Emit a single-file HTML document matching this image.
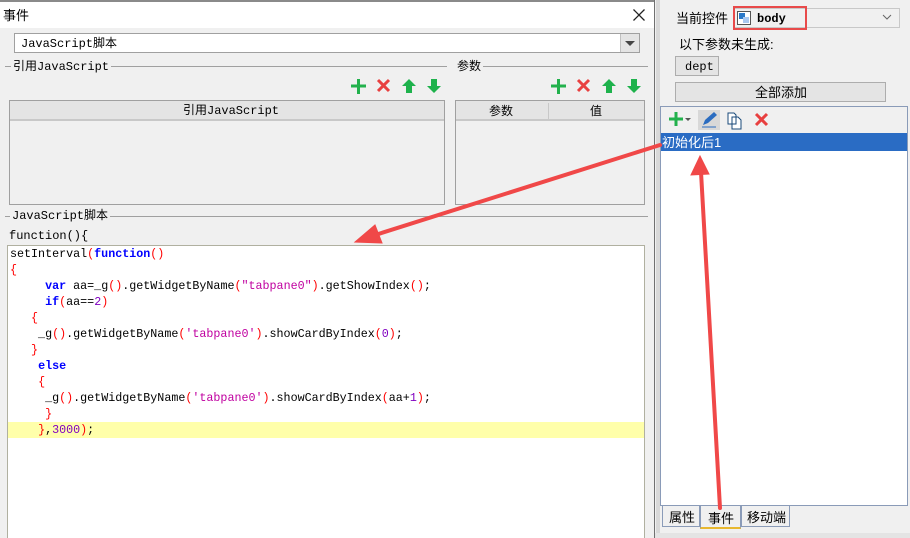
<!DOCTYPE html>
<html><head><meta charset="utf-8"><style>
*{margin:0;padding:0;box-sizing:border-box}
body{width:910px;height:538px;overflow:hidden;background:#f0f0f0;font-family:"Liberation Sans","Noto Sans CJK SC",sans-serif;font-size:12px;line-height:15px;color:#000;position:relative}
.a{position:absolute}
.mono{font-family:"Liberation Mono","Noto Sans CJK SC",monospace}
.code{font-family:"Liberation Mono","Noto Sans CJK SC",monospace;font-size:11.7px;white-space:pre;line-height:16px}
.k{color:#0000ff;font-weight:bold}.p{color:#ff0000}.s{color:#c000a0}.n{color:#8000c0}
</style></head><body>
<div class="a" style="left:0;top:0;width:655px;height:538px;background:#f0f0f0;border-right:1px solid #707070"></div>
<div class="a" style="left:0;top:0;width:654px;height:2px;background:#8a8a8a"></div>
<div class="a" style="left:0;top:2px;width:654px;height:26px;background:#fff"></div>
<div class="a" style="left:3px;top:8px;font-size:13px">事件</div>
<svg class="a" style="left:633px;top:9px" width="12" height="12"><path d="M0.5 0.5l11 11M11.5 0.5l-11 11" stroke="#222" stroke-width="1.3"/></svg>
<div class="a" style="left:14px;top:33px;width:626px;height:20px;background:#fff;border:1px solid #a0a0a0"></div>
<div class="a mono" style="left:21px;top:37px;font-size:12px">JavaScript脚本</div>
<div class="a" style="left:620px;top:34px;width:19px;height:18px;background:#e4e4e4;border-left:1px solid #c0c0c0"></div>
<div class="a" style="left:625px;top:41px;width:0;height:0;border-left:5px solid transparent;border-right:5px solid transparent;border-top:5px solid #444"></div>
<div class="a" style="left:5px;top:66px;width:442px;height:1px;background:#a0a0a0"></div>
<div class="a mono" style="left:11px;top:60px;background:#f0f0f0;padding:0 2px;font-size:12px">引用JavaScript</div>
<div class="a" style="left:455px;top:66px;width:193px;height:1px;background:#a0a0a0"></div>
<div class="a" style="left:455px;top:59px;background:#f0f0f0;padding:0 2px;font-size:12px">参数</div>
<svg class="a" style="left:350px;top:78px" width="95" height="16"><g stroke-width="3"><path d="M1 8h15M8.5 1v15" stroke="#22b14c"/><path d="M28 2l11 11M39 2l-11 11" stroke="#e84040"/></g><path d="M59 1l-7 7h4v7h6v-7h4z" fill="#1eb24c"/><path d="M84 15l-7-7h4v-7h6v7h4z" fill="#1eb24c"/></svg>
<svg class="a" style="left:550px;top:78px" width="95" height="16"><g stroke-width="3"><path d="M1 8h15M8.5 1v15" stroke="#22b14c"/><path d="M28 2l11 11M39 2l-11 11" stroke="#e84040"/></g><path d="M59 1l-7 7h4v7h6v-7h4z" fill="#1eb24c"/><path d="M84 15l-7-7h4v-7h6v7h4z" fill="#1eb24c"/></svg>
<div class="a" style="left:9px;top:100px;width:436px;height:105px;border:1px solid #a0a0a0;background:#f0f0f0"></div>
<div class="a" style="left:10px;top:101px;width:434px;height:20px;background:#e4e4e4;border-bottom:2px solid #c8c8c8"></div>
<div class="a mono" style="left:183px;top:104px;font-size:12px">引用JavaScript</div>
<div class="a" style="left:455px;top:100px;width:190px;height:105px;border:1px solid #a0a0a0;background:#f0f0f0"></div>
<div class="a" style="left:456px;top:101px;width:188px;height:20px;background:#e4e4e4;border-bottom:2px solid #c8c8c8"></div>
<div class="a" style="left:548px;top:103px;width:1px;height:16px;background:#c8c8c8"></div>
<div class="a" style="left:489px;top:104px">参数</div>
<div class="a" style="left:590px;top:104px">值</div>
<div class="a" style="left:5px;top:216px;width:643px;height:1px;background:#a0a0a0"></div>
<div class="a mono" style="left:10px;top:209px;background:#f0f0f0;padding:0 2px;font-size:12px">JavaScript脚本</div>
<div class="a mono" style="left:9px;top:229px;font-size:12px">function(){</div>
<div class="a" style="left:7px;top:245px;width:638px;height:293px;background:#fff;border:1px solid #b0b0a0;border-bottom:none"></div>
<div class="a" style="left:8px;top:422px;width:636px;height:16px;background:#ffffaa"></div>
<div class="a code" style="left:10px;top:246px">setInterval<span class="p">(</span><span class="k">function</span><span class="p">()</span>
<span class="p">{</span>
     <span class="k">var</span> aa=_g<span class="p">()</span>.getWidgetByName<span class="p">(</span><span class="s">"tabpane0"</span><span class="p">)</span>.getShowIndex<span class="p">()</span>;
     <span class="k">if</span><span class="p">(</span>aa==<span class="n">2</span><span class="p">)</span>
   <span class="p">{</span>
    _g<span class="p">()</span>.getWidgetByName<span class="p">(</span><span class="s">'tabpane0'</span><span class="p">)</span>.showCardByIndex<span class="p">(</span><span class="n">0</span><span class="p">)</span>;
   <span class="p">}</span>
    <span class="k">else</span>
    <span class="p">{</span>
     _g<span class="p">()</span>.getWidgetByName<span class="p">(</span><span class="s">'tabpane0'</span><span class="p">)</span>.showCardByIndex<span class="p">(</span>aa+<span class="n">1</span><span class="p">)</span>;
     <span class="p">}</span>
    <span class="p">}</span>,<span class="n">3000</span><span class="p">)</span>;</div>
<div class="a" style="left:656px;top:0;width:4px;height:538px;background:#d8d8d8"></div>
<div class="a" style="left:676px;top:11px;font-size:13px">当前控件</div>
<div class="a" style="left:733px;top:8px;width:167px;height:20px;background:#f0f0f0;border:1px solid #c8c8c8"></div>
<div class="a" style="left:733px;top:6px;width:74px;height:24px;border:2px solid #e84a4a"></div>
<svg class="a" style="left:737px;top:11px" width="14" height="14"><rect x=".5" y=".5" width="13" height="13" fill="#fff" stroke="#555"/><rect x="2" y="2" width="6" height="6" fill="#2a78c8"/><rect x="6" y="6" width="6" height="6" fill="#a8c8f0"/></svg>
<div class="a mono" style="left:757px;top:12px;font-size:12px;font-weight:bold">body</div>
<svg class="a" style="left:882px;top:14px" width="10" height="7"><path d="M1 1l4 4 4-4" stroke="#666" fill="none"/></svg>
<div class="a" style="left:679px;top:37px;font-size:13px">以下参数未生成:</div>
<div class="a" style="left:675px;top:56px;width:44px;height:20px;background:#e4e4e4;border:1px solid #adadad"></div>
<div class="a mono" style="left:685px;top:60px;font-size:12px">dept</div>
<div class="a" style="left:675px;top:82px;width:211px;height:20px;background:#e4e4e4;border:1px solid #adadad"></div>
<div class="a" style="left:755px;top:85px;font-size:13px">全部添加</div>
<div class="a" style="left:660px;top:106px;width:248px;height:400px;background:#fff;border:1px solid #8a9bb8"></div>
<div class="a" style="left:661px;top:107px;width:246px;height:26px;background:#f0f0f0"></div>
<svg class="a" style="left:668px;top:110px" width="110" height="20"><path d="M1 9h14M8 2v14" stroke="#22b14c" stroke-width="3"/><path d="M17 8l3 3 3-3z" fill="#555"/><rect x="30" y="0" width="22" height="20" fill="#d8d8d8"/><path d="M35 15l2-5 9-8 3 3-9 8z" fill="#2a6cc0"/><path d="M34 17h14" stroke="#2a6cc0"/><path d="M60 3h6l2 2v9h-8z M64 7h6l3 3v9h-9z" fill="#fff" stroke="#1a4a7a"/><path d="M88 4l11 11M99 4l-11 11" stroke="#e84040" stroke-width="3"/></svg>
<div class="a" style="left:661px;top:133px;width:246px;height:18px;background:#2a6cc4"></div>
<div class="a" style="left:662px;top:135px;color:#fff;font-size:13px">初始化后1</div>
<div class="a" style="left:662px;top:506px;width:38px;height:21px;border:1px solid #8a9bb8;border-top:none;background:#f0f0f0"></div>
<div class="a" style="left:669px;top:510px;font-size:13px">属性</div>
<div class="a" style="left:700px;top:506px;width:41px;height:23px;border:1px solid #8a9bb8;border-top:none;background:#f0f0f0;border-bottom:2px solid #e8b830"></div>
<div class="a" style="left:708px;top:511px;font-size:13px">事件</div>
<div class="a" style="left:741px;top:506px;width:49px;height:21px;border:1px solid #8a9bb8;border-top:none;background:#f0f0f0"></div>
<div class="a" style="left:747px;top:510px;font-size:13px">移动端</div>
<div class="a" style="left:655px;top:533px;width:255px;height:5px;background:#e4e4e4"></div>
<svg class="a" style="left:0;top:0" width="910" height="538">
<g stroke="#f04848" stroke-width="4" fill="#f04848" stroke-linecap="round">
<path d="M660 145L372 236"/><path d="M355 242l20-17 7 18z" stroke-width="1"/>
<path d="M720 508L701 172"/><path d="M700 156l-9 19 18-1z" stroke-width="1"/>
</g></svg>
</body></html>
